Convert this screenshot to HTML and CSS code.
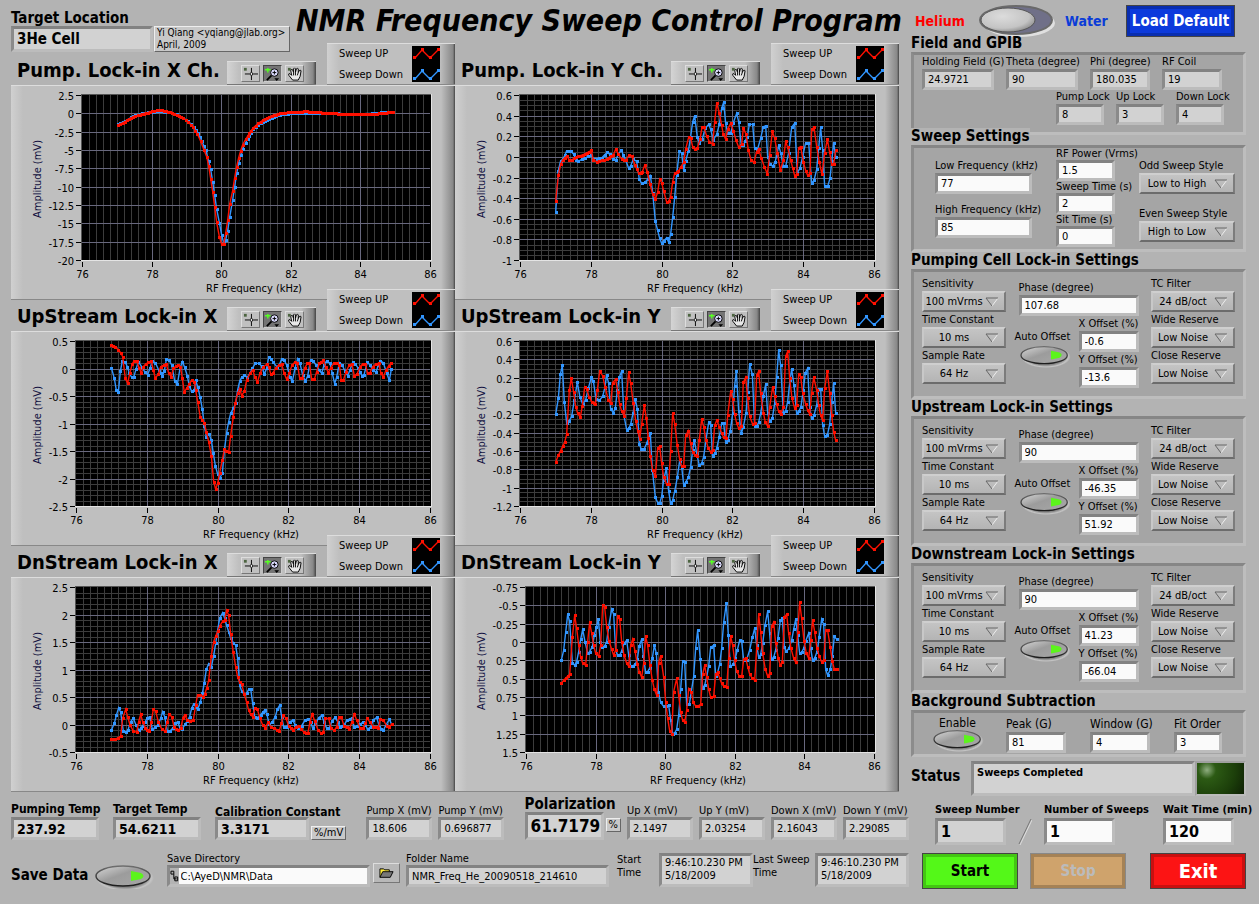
FILE: index.html
```html
<!DOCTYPE html>
<html lang="en">

<head>
  <meta charset="UTF-8">
  <meta name="viewport" content="width=device-width, initial-scale=1.0">
  <title>NMR Frequency Sweep Control Program</title>
  <link rel="stylesheet" href="styles.css">
</head>

<body>

<!-- Shared icons -->
<svg class="icons" width="0" height="0" aria-hidden="true">
  <defs>
    <linearGradient id="metal" x1="0" y1="0" x2="1" y2="1">
      <stop offset="0" stop-color="#d8d8d8"/>
      <stop offset="0.45" stop-color="#9c9c9c"/>
      <stop offset="1" stop-color="#a8a8a8"/>
    </linearGradient>
    <linearGradient id="rim" x1="0" y1="0" x2="0" y2="1">
      <stop offset="0" stop-color="#6e6e6e"/>
      <stop offset="1" stop-color="#1c1c1c"/>
    </linearGradient>
    <radialGradient id="halo">
      <stop offset="0.75" stop-color="#8a8a8a"/>
      <stop offset="0.9" stop-color="#c4c4c4"/>
      <stop offset="1" stop-color="#c4c4c4" stop-opacity="0"/>
    </radialGradient>
    <radialGradient id="knob" cx="0.4" cy="0.35" r="0.7">
      <stop offset="0" stop-color="#dcdcdc"/>
      <stop offset="0.7" stop-color="#c4c4c4"/>
      <stop offset="1" stop-color="#8a8a8a"/>
    </radialGradient>
  </defs>
  <symbol id="led" viewBox="0 0 60 28">
    <ellipse cx="31" cy="15" rx="29" ry="13" fill="url(#halo)"/>
    <ellipse cx="29" cy="13" rx="27" ry="10" fill="url(#metal)" stroke="url(#rim)" stroke-width="1.5"/>
    <path d="M37 8 l10 2 q5 3 0 6 l-10 2 z" fill="#5cf41c"/>
  </symbol>
  <symbol id="arrow" viewBox="0 0 14 10">
    <path d="M13 1 L7 9" stroke="#eee" fill="none"/>
    <path d="M7 9 L1 1 H13" stroke="#666" fill="none"/>
  </symbol>
  <symbol id="cursor" viewBox="0 0 18 16">
    <rect x="2" y="2" width="3" height="3" fill="#4c6440"/>
    <path d="M10 2v5M10 10v5M3 8.500h5M12 8.500h5" stroke="#000"/>
    <circle cx="10" cy="8.500" r="1.500" fill="#fff" stroke="#000"/>
  </symbol>
  <symbol id="zoom" viewBox="0 0 18 16">
    <path d="M4 2v5M1 4h6" stroke="#5f2" stroke-width="1.500"/>
    <path d="M8 10 L3 15" stroke="#000" stroke-width="2"/>
    <circle cx="11" cy="7" r="4" fill="#dcdcff" stroke="#000"/>
    <path d="M11 5v4M9 7h4" stroke="#000"/>
    <path d="M11 13h5l-2.500 3z" fill="#000"/>
  </symbol>
  <symbol id="hand" viewBox="0 0 18 16">
    <rect x="2" y="2" width="3" height="3" fill="#4c6440"/>
    <path d="M7 15 L3 10 Q2 8 4 8 L6 10 L5 5 Q5 3 7 4 L8 7 V3 Q9 1 10 3 V7 L11 3 Q12 2 13 3 L13 7 L14 5 Q15 4 16 5 L15 11 L13 15 Z" fill="#e8e8e8" stroke="#000"/>
    <path d="M8 7v3M10 7v3M13 7l-1 3" stroke="#000"/>
  </symbol>
  <symbol id="keys" viewBox="0 0 28 36">
    <rect width="28" height="36" fill="#000"/>
    <path d="M3 12 L10 4 L18 12 L26 4" fill="none" stroke="#ff1000" stroke-width="1.3"/>
    <path d="M1 10h3v3h-3zM9 2h3v3h-3zM17 10h3v3h-3zM25 2h3v3h-3z" fill="#ff1000"/>
    <path d="M3 33 L10 25 L18 33 L26 25" fill="none" stroke="#3296ff" stroke-width="1.3"/>
    <path d="M1 31h3v3h-3zM9 23h3v3h-3zM17 31h3v3h-3zM25 23h3v3h-3z" fill="#3296ff"/>
  </symbol>
</svg>

<div class="panel">

  <main class="main">

    <header class="masthead">
      <label class="field target">
        <b>Target Location</b>
        <input class="grey" value="3He Cell" readonly>
      </label>
      <p class="note credit">Yi Qiang &lt;yqiang@jlab.org&gt;<br>April, 2009</p>
      <h1>NMR Frequency Sweep Control Program</h1>
    </header>

    <div class="graphs">
      <section class="graph">
        <header>
          <h2>Pump. Lock-in X Ch.</h2>
          <div class="palette">
            <button aria-label="Cursor"><svg><use href="#cursor"/></svg></button>
            <button class="on" aria-label="Zoom"><svg><use href="#zoom"/></svg></button>
            <button aria-label="Pan"><svg><use href="#hand"/></svg></button>
          </div>
          <div class="legend"><p>Sweep UP<br>Sweep Down</p><svg><use href="#keys"/></svg></div>
        </header>
        <svg class="plot" data-plot="pumpX"></svg>
      </section>

      <section class="graph">
        <header>
          <h2>Pump. Lock-in Y Ch.</h2>
          <div class="palette">
            <button aria-label="Cursor"><svg><use href="#cursor"/></svg></button>
            <button class="on" aria-label="Zoom"><svg><use href="#zoom"/></svg></button>
            <button aria-label="Pan"><svg><use href="#hand"/></svg></button>
          </div>
          <div class="legend"><p>Sweep UP<br>Sweep Down</p><svg><use href="#keys"/></svg></div>
        </header>
        <svg class="plot" data-plot="pumpY"></svg>
      </section>

      <section class="graph">
        <header>
          <h2>UpStream Lock-in X</h2>
          <div class="palette">
            <button aria-label="Cursor"><svg><use href="#cursor"/></svg></button>
            <button class="on" aria-label="Zoom"><svg><use href="#zoom"/></svg></button>
            <button aria-label="Pan"><svg><use href="#hand"/></svg></button>
          </div>
          <div class="legend"><p>Sweep UP<br>Sweep Down</p><svg><use href="#keys"/></svg></div>
        </header>
        <svg class="plot" data-plot="upX"></svg>
      </section>

      <section class="graph">
        <header>
          <h2>UpStream Lock-in Y</h2>
          <div class="palette">
            <button aria-label="Cursor"><svg><use href="#cursor"/></svg></button>
            <button class="on" aria-label="Zoom"><svg><use href="#zoom"/></svg></button>
            <button aria-label="Pan"><svg><use href="#hand"/></svg></button>
          </div>
          <div class="legend"><p>Sweep UP<br>Sweep Down</p><svg><use href="#keys"/></svg></div>
        </header>
        <svg class="plot" data-plot="upY"></svg>
      </section>

      <section class="graph">
        <header>
          <h2>DnStream Lock-in X</h2>
          <div class="palette">
            <button aria-label="Cursor"><svg><use href="#cursor"/></svg></button>
            <button class="on" aria-label="Zoom"><svg><use href="#zoom"/></svg></button>
            <button aria-label="Pan"><svg><use href="#hand"/></svg></button>
          </div>
          <div class="legend"><p>Sweep UP<br>Sweep Down</p><svg><use href="#keys"/></svg></div>
        </header>
        <svg class="plot" data-plot="dnX"></svg>
      </section>

      <section class="graph">
        <header>
          <h2>DnStream Lock-in Y</h2>
          <div class="palette">
            <button aria-label="Cursor"><svg><use href="#cursor"/></svg></button>
            <button class="on" aria-label="Zoom"><svg><use href="#zoom"/></svg></button>
            <button aria-label="Pan"><svg><use href="#hand"/></svg></button>
          </div>
          <div class="legend"><p>Sweep UP<br>Sweep Down</p><svg><use href="#keys"/></svg></div>
        </header>
        <svg class="plot" data-plot="dnY"></svg>
      </section>
    </div>

    <!-- Results -->
    <div class="results">
      <div class="group temps">
        <label class="field bold"><b>Pumping Temp</b><input class="grey" value="237.92" readonly></label>
        <label class="field bold"><b>Target Temp</b><input class="grey" value="54.6211" readonly></label>
        <label class="field bold tight"><b>Calibration Constant</b><input class="grey" value="3.3171" readonly></label>
        <span class="note">%/mV</span>
      </div>
      <div class="group">
        <label class="field"><span>Pump X (mV)</span><input class="grey" value="18.606" readonly></label>
        <label class="field"><span>Pump Y (mV)</span><input class="grey" value="0.696877" readonly></label>
      </div>
      <div class="group">
        <label class="field polarization"><b>Polarization</b><input class="grey" value="61.7179" readonly></label>
        <span class="note percent">%</span>
        <label class="field"><span>Up X (mV)</span><input class="grey" value="2.1497" readonly></label>
        <label class="field"><span>Up Y (mV)</span><input class="grey" value="2.03254" readonly></label>
        <label class="field"><span>Down X (mV)</span><input class="grey" value="2.16043" readonly></label>
        <label class="field"><span>Down Y (mV)</span><input class="grey" value="2.29085" readonly></label>
      </div>
    </div>

    <!-- Saving -->
    <div class="saving">
      <label class="save" for="save-data">Save Data</label>
      <button class="led large" id="save-data"><svg><use href="#led"/></svg></button>
      <div class="field path">
        <label for="save-dir">Save Directory</label>
        <div class="pathbox">
          <svg viewBox="0 0 9 12"><path d="M1 1h3v3h-3zM4 4v5M4 9h3M5 7h3v4h-3z" fill="none" stroke="#000"/></svg>
          <input id="save-dir" value="C:\AyeD\NMR\Data">
        </div>
      </div>
      <button class="browse" aria-label="Browse">
        <svg viewBox="0 0 16 12"><path d="M1 11V2h4l1 1h5v2" fill="#ffec3d" stroke="#000"/><path d="M1 11L4 5h11l-3 6z" fill="#777" stroke="#000"/></svg>
      </button>
      <label class="field path"><span>Folder Name</span><input class="grey" value="NMR_Freq_He_20090518_214610" readonly></label>
      <label class="stamp start" for="start-time">Start Time</label>
      <output class="time" id="start-time">9:46:10.230 PM<br>5/18/2009</output>
      <label class="stamp" for="last-time">Last Sweep Time</label>
      <output class="time" id="last-time">9:46:10.230 PM<br>5/18/2009</output>
    </div>

  </main>

  <aside class="side">

    <div class="top">
      <span class="helium">Helium</span>
      <button class="toggle" aria-label="Helium or water">
        <svg viewBox="0 0 76 32">
          <ellipse cx="40" cy="18" rx="36" ry="14" fill="#e0e0e0"/>
          <ellipse cx="37" cy="15" rx="36" ry="14" fill="#707088" stroke="#6a6a6a" stroke-width="2"/>
          <ellipse cx="29" cy="15" rx="27" ry="12" fill="url(#knob)" stroke="#555"/>
        </svg>
      </button>
      <span class="water">Water</span>
      <button class="push load">Load Default</button>
    </div>

    <h3>Field and GPIB</h3>
    <div class="box gpib">
      <div class="line">
        <label class="field"><span>Holding Field (G)</span><input class="grey" value="24.9721" readonly></label>
        <label class="field"><span>Theta (degree)</span><input class="grey" value="90" readonly></label>
        <label class="field narrow"><span>Phi (degree)</span><input class="grey" value="180.035" readonly></label>
        <label class="field narrow"><span>RF Coil</span><input class="grey" value="19" readonly></label>
      </div>
      <div class="line locks">
        <label class="field"><span>Pump Lock</span><input class="grey" value="8" readonly></label>
        <label class="field"><span>Up Lock</span><input class="grey" value="3" readonly></label>
        <label class="field"><span>Down Lock</span><input class="grey" value="4" readonly></label>
      </div>
    </div>

    <h3 class="over">Sweep Settings</h3>
    <div class="box sweep">
      <div class="col freq">
        <label class="field"><span>Low Frequency (kHz)</span><input value="77"></label>
        <label class="field"><span>High Frequency (kHz)</span><input value="85"></label>
      </div>
      <div class="col timing">
        <label class="field"><span>RF Power (Vrms)</span><input value="1.5"></label>
        <label class="field"><span>Sweep Time (s)</span><input value="2"></label>
        <label class="field"><span>Sit Time (s)</span><input value="0"></label>
      </div>
      <div class="col style">
        <label class="field"><span>Odd Sweep Style</span><span class="ring"><select><option>Low to High</option></select><svg><use href="#arrow"/></svg></span></label>
        <label class="field"><span>Even Sweep Style</span><span class="ring"><select><option>High to Low</option></select><svg><use href="#arrow"/></svg></span></label>
      </div>
    </div>

    <h3>Pumping Cell Lock-in Settings</h3>
    <div class="box lockin">
      <div class="col">
        <label class="field"><span>Sensitivity</span><span class="ring"><select><option>100 mVrms</option></select><svg><use href="#arrow"/></svg></span></label>
        <label class="field"><span>Time Constant</span><span class="ring"><select><option>10 ms</option></select><svg><use href="#arrow"/></svg></span></label>
        <label class="field"><span>Sample Rate</span><span class="ring"><select><option>64 Hz</option></select><svg><use href="#arrow"/></svg></span></label>
      </div>
      <div class="middle">
        <label class="field phase"><span>Phase (degree)</span><input value="107.68"></label>
        <div class="offset">
          <label for="auto-1">Auto Offset</label>
          <button class="led" id="auto-1"><svg><use href="#led"/></svg></button>
        </div>
        <div class="col">
          <label class="field"><span>X Offset (%)</span><input value="-0.6"></label>
          <label class="field"><span>Y Offset (%)</span><input value="-13.6"></label>
        </div>
      </div>
      <div class="col">
        <label class="field"><span>TC Filter</span><span class="ring"><select><option>24 dB/oct</option></select><svg><use href="#arrow"/></svg></span></label>
        <label class="field"><span>Wide Reserve</span><span class="ring"><select><option>Low Noise</option></select><svg><use href="#arrow"/></svg></span></label>
        <label class="field"><span>Close Reserve</span><span class="ring"><select><option>Low Noise</option></select><svg><use href="#arrow"/></svg></span></label>
      </div>
    </div>

    <h3>Upstream Lock-in Settings</h3>
    <div class="box lockin">
      <div class="col">
        <label class="field"><span>Sensitivity</span><span class="ring"><select><option>100 mVrms</option></select><svg><use href="#arrow"/></svg></span></label>
        <label class="field"><span>Time Constant</span><span class="ring"><select><option>10 ms</option></select><svg><use href="#arrow"/></svg></span></label>
        <label class="field"><span>Sample Rate</span><span class="ring"><select><option>64 Hz</option></select><svg><use href="#arrow"/></svg></span></label>
      </div>
      <div class="middle">
        <label class="field phase"><span>Phase (degree)</span><input value="90"></label>
        <div class="offset">
          <label for="auto-2">Auto Offset</label>
          <button class="led" id="auto-2"><svg><use href="#led"/></svg></button>
        </div>
        <div class="col">
          <label class="field"><span>X Offset (%)</span><input value="-46.35"></label>
          <label class="field"><span>Y Offset (%)</span><input value="51.92"></label>
        </div>
      </div>
      <div class="col">
        <label class="field"><span>TC Filter</span><span class="ring"><select><option>24 dB/oct</option></select><svg><use href="#arrow"/></svg></span></label>
        <label class="field"><span>Wide Reserve</span><span class="ring"><select><option>Low Noise</option></select><svg><use href="#arrow"/></svg></span></label>
        <label class="field"><span>Close Reserve</span><span class="ring"><select><option>Low Noise</option></select><svg><use href="#arrow"/></svg></span></label>
      </div>
    </div>

    <h3>Downstream Lock-in Settings</h3>
    <div class="box lockin">
      <div class="col">
        <label class="field"><span>Sensitivity</span><span class="ring"><select><option>100 mVrms</option></select><svg><use href="#arrow"/></svg></span></label>
        <label class="field"><span>Time Constant</span><span class="ring"><select><option>10 ms</option></select><svg><use href="#arrow"/></svg></span></label>
        <label class="field"><span>Sample Rate</span><span class="ring"><select><option>64 Hz</option></select><svg><use href="#arrow"/></svg></span></label>
      </div>
      <div class="middle">
        <label class="field phase"><span>Phase (degree)</span><input value="90"></label>
        <div class="offset">
          <label for="auto-3">Auto Offset</label>
          <button class="led" id="auto-3"><svg><use href="#led"/></svg></button>
        </div>
        <div class="col">
          <label class="field"><span>X Offset (%)</span><input value="41.23"></label>
          <label class="field"><span>Y Offset (%)</span><input value="-66.04"></label>
        </div>
      </div>
      <div class="col">
        <label class="field"><span>TC Filter</span><span class="ring"><select><option>24 dB/oct</option></select><svg><use href="#arrow"/></svg></span></label>
        <label class="field"><span>Wide Reserve</span><span class="ring"><select><option>Low Noise</option></select><svg><use href="#arrow"/></svg></span></label>
        <label class="field"><span>Close Reserve</span><span class="ring"><select><option>Low Noise</option></select><svg><use href="#arrow"/></svg></span></label>
      </div>
    </div>

    <h3>Background Subtraction</h3>
    <div class="box background">
      <div class="enable">
        <label for="enable">Enable</label>
        <button class="led" id="enable"><svg><use href="#led"/></svg></button>
      </div>
      <label class="field"><span>Peak (G)</span><input value="81"></label>
      <label class="field"><span>Window (G)</span><input value="4"></label>
      <label class="field order"><span>Fit Order</span><input value="3"></label>
    </div>

    <div class="status">
      <h3>Status</h3>
      <output class="message">Sweeps Completed</output>
      <span class="lamp"></span>
    </div>

    <div class="counts">
      <label class="field bold"><b>Sweep Number</b><input class="grey" value="1" readonly></label>
      <svg viewBox="0 0 14 26"><path d="M13 0L1 25" stroke="#777"/><path d="M14 1L2 26" stroke="#ddd"/></svg>
      <label class="field bold"><b>Number of Sweeps</b><input value="1"></label>
      <label class="field bold wait"><b>Wait Time (min)</b><input value="120"></label>
    </div>

    <div class="actions">
      <button class="push go">Start</button>
      <button class="push stop" disabled>Stop</button>
      <button class="push exit">Exit</button>
    </div>

  </aside>
</div>

<script src="plots.js"></script>
</body>

</html>
```

FILE: styles.css
```css
*,
*::before,
*::after {
  box-sizing: border-box;
}

body {
  margin: 0;
  background: #b3b3b3;
  color: #000;
  font: 11px/12px "DejaVu Sans Condensed", "DejaVu Sans", sans-serif;
}

h1,
h2,
h3,
p {
  margin: 0;
}

button,
input,
select {
  font: inherit;
  color: inherit;
  margin: 0;
  border-radius: 0;
}

button {
  padding: 0;
  border: 0;
  background: none;
}

svg {
  display: block;
}

.icons {
  position: absolute;
}

.panel {
  display: grid;
  grid-template-columns: minmax(0, 898fr) minmax(0, 335fr);
  gap: 2px;
  padding: 0 13px 0 11px;
}

/* fields */

.field {
  display: flex;
  flex-direction: column;
  min-width: 0;
  white-space: nowrap;
}

input,
.time,
.message {
  width: 100%;
  min-width: 0;
  height: 21px;
  padding: 0 0 0 3px;
  border: 3px solid;
  border-color: #828282 #bcbcbc #bcbcbc #8a8a8a;
  background: #fafafa;
  outline: 0;
}

input.grey,
.time,
.message {
  background: #d2d2d2;
}

.bold input {
  font-weight: bold;
}

.note {
  padding: 0 2px;
  border: 1px solid;
  border-color: #eee #666 #666 #eee;
  background: #c8c8c8;
}

.ring {
  display: grid;
  align-items: center;
}

.ring select,
.ring svg {
  grid-area: 1 / 1;
}

.ring select {
  width: 100%;
  height: 21px;
  padding: 0 20px 0 0;
  border: 2px solid;
  border-color: #cfcfcf #7c7c7c #6c6c6c #c8c8c8;
  background: linear-gradient(#c4c4c4, #b4b4b4);
  text-align: center;
  text-align-last: center;
  appearance: none;
}

.ring svg {
  justify-self: end;
  width: 14px;
  height: 10px;
  margin-right: 7px;
  pointer-events: none;
}

.led {
  width: 52px;
  height: 24px;
}

.led svg {
  width: 100%;
  height: 100%;
}

/* masthead */

.masthead {
  display: flex;
  align-items: flex-end;
  height: 52px;
}

.target {
  width: 142px;
}

.target b {
  font-size: 15px;
  line-height: 16px;
}

.target input {
  height: 26px;
  font-size: 15px;
  font-weight: bold;
}

.credit {
  width: 136px;
  height: 26px;
  margin-left: 1px;
  font-size: 10px;
  white-space: nowrap;
}

h1 {
  flex: 1;
  align-self: flex-start;
  padding: 3px 0 0 6px;
  font-size: 30px;
  line-height: 36px;
  font-style: italic;
  white-space: nowrap;
}

/* graphs */

.graphs {
  display: grid;
  grid-template-columns: 1fr 1fr;
  margin: -9px 10px 0 0;
}

.graph + .graph + .graph {
  margin-top: -11px;
}

.graph header {
  position: relative;
  display: flex;
  align-items: flex-end;
  height: 42px;
}

.graph h2 {
  flex: 1;
  padding: 0 0 3px 6px;
  font-size: 20px;
  line-height: 24px;
  white-space: nowrap;
}

.palette {
  display: flex;
  align-items: center;
  gap: 3px;
  width: 89px;
  height: 24px;
  padding-left: 14px;
  border-top: 1px solid #ddd;
  border-bottom: 1px solid #777;
  background: linear-gradient(90deg, #d4d4d4, #bfbfbf 12px, #bfbfbf 74px, #888 86px, #444);
}

.palette button {
  width: 19px;
  height: 17px;
  border: 1px solid;
  border-color: #ddd #777 #777 #ddd;
  background: #c0c0c0;
}

.palette .on {
  border-color: #444 #ccc #ccc #444;
  background: #747474;
}

.palette svg {
  width: 17px;
  height: 15px;
}

.legend {
  display: flex;
  justify-content: space-between;
  width: 128px;
  height: 42px;
  margin-left: 11px;
  padding: 2px 15px 3px 12px;
  border-top: 1px solid #ddd;
  border-bottom: 1px solid #888;
  background: linear-gradient(90deg, #d0d0d0, #bfbfbf 12px, #bfbfbf 113px, #888 126px, #444);
  line-height: 21px;
  white-space: nowrap;
}

.legend p {
  margin-top: -3px;
}

.legend svg {
  width: 28px;
  height: 36px;
}

.plot {
  width: 100%;
  height: auto;
  aspect-ratio: 444 / 215;
  border-top: 1px solid #ddd;
  border-bottom: 1px solid #888;
  background: linear-gradient(90deg, #d0d0d0, #bfbfbf 12px, #bfbfbf calc(100% - 14px), #888 calc(100% - 2px), #444);
}

.plot text {
  font-size: 11px;
}

/* results */

.results {
  display: flex;
  justify-content: space-between;
  align-items: flex-end;
  margin-top: 4px;
}

.group {
  display: flex;
  align-items: flex-end;
  gap: 6px;
}

.group .field {
  width: 66px;
}

.group .field input {
  height: 23px;
}

.temps {
  gap: 14px;
}

.group .bold {
  width: 88px;
}

.group .bold b {
  font-size: 12px;
  line-height: 15px;
}

.group .bold input {
  font-size: 14px;
}

.group .tight {
  width: 94px;
}

.group .tight b {
  line-height: 10px;
}

.temps .note {
  margin-left: -12px;
}

.group .polarization {
  width: 79px;
}

.polarization b {
  font-size: 15px;
  line-height: 16px;
}

.group .polarization input {
  height: 28px;
  font-size: 17px;
  font-weight: bold;
}

.percent {
  margin: 0 0 8px -4px;
}

/* saving */

.saving {
  display: flex;
  align-items: flex-end;
  margin-top: 13px;
}

.save {
  width: 82px;
  font-size: 15px;
  font-weight: bold;
  line-height: 24px;
  white-space: nowrap;
}

.large {
  width: 62px;
  height: 28px;
  margin: 0 12px -4px 0;
}

.path {
  flex: 1;
}

.path > input,
.pathbox {
  height: 22px;
}

.pathbox {
  display: flex;
  align-items: center;
  border: 3px solid;
  border-color: #828282 #bcbcbc #bcbcbc #8a8a8a;
}

.pathbox svg {
  width: 9px;
  height: 12px;
}

.pathbox input {
  height: 16px;
  padding-left: 2px;
  border: 0;
}

.browse {
  width: 27px;
  height: 20px;
  margin: 0 6px 4px 3px;
  padding: 2px 5px;
  border: 1px solid;
  border-color: #ddd #777 #777 #ddd;
  background: #b8b8b8;
}

.stamp {
  width: 62px;
  align-self: flex-start;
  line-height: 13px;
}

.start {
  width: 50px;
  padding: 0 16px 0 8px;
}

.time {
  width: 94px;
  height: 34px;
  line-height: 13px;
  white-space: nowrap;
}

/* side column */

.top {
  display: flex;
  align-items: center;
  height: 37px;
  padding: 5px 11px 0 4px;
  font-size: 14px;
  font-weight: bold;
}

.helium {
  width: 64px;
  color: #f00;
}

.toggle {
  width: 76px;
  height: 32px;
}

.water {
  flex: 1;
  padding-left: 10px;
  color: #0a3cd8;
}

.push {
  border: 1px solid #444;
  outline: 3px solid #0003;
  outline-offset: -4px;
  font-weight: bold;
}

.load {
  width: 109px;
  height: 32px;
  background: #0c3adc;
  color: #fff;
  font-size: 15px;
}

h3 {
  width: fit-content;
  font-size: 15px;
  line-height: 17px;
  white-space: nowrap;
}

.top + h3 {
  margin-top: -2px;
}

.over {
  position: relative;
  margin-top: -7px;
  background: #b3b3b3;
}

.box {
  display: flex;
  border: 3px solid;
  border-color: #868686 #bdbdbd #bdbdbd #8c8c8c;
  background: #a5a5a5;
}

.col {
  display: flex;
  flex-direction: column;
}

.gpib {
  flex-direction: column;
  height: 83px;
  padding-left: 8px;
}

.line {
  display: flex;
  gap: 12px;
}

.line .field {
  width: 72px;
}

.line .narrow {
  width: 60px;
}

.line .field span {
  line-height: 14px;
}

.locks {
  padding-left: 134px;
}

.locks .field {
  width: 48px;
}

.sweep {
  justify-content: space-between;
  height: 107px;
  padding: 0 8px 0 21px;
}

.freq {
  width: 97px;
  padding-top: 10px;
  gap: 8px;
}

.freq span {
  line-height: 15px;
}

.timing {
  width: 59px;
}

.style {
  width: 96px;
  padding-top: 10px;
  gap: 12px;
}

.style .field > span:first-child {
  line-height: 15px;
}

.lockin {
  justify-content: space-between;
  height: 130px;
  padding: 4px 8px 0;
}

.lockin > .col {
  width: 84px;
}

.lockin .field > span:first-child {
  line-height: 15px;
}

.middle {
  display: grid;
  grid-template-columns: 60px 60px;
  align-content: start;
  padding-top: 4px;
}

.phase {
  grid-column: 1 / -1;
}

.offset {
  padding-top: 14px;
  white-space: nowrap;
}

.offset label {
  display: block;
  margin: 0 -4px;
  line-height: 14px;
}

.background {
  height: 47px;
  padding-left: 18px;
  font-size: 12px;
}

.background .field {
  width: 60px;
  margin: 3px 24px 0 0;
}

.background .order {
  width: 48px;
  margin-right: 0;
}

.background .field span {
  line-height: 16px;
}

.background input {
  font-size: 11px;
}

.enable {
  width: 74px;
  padding-top: 4px;
}

.enable label {
  display: block;
  padding-left: 7px;
}

.enable .led {
  margin-top: -1px;
}

.status {
  display: flex;
  height: 35px;
  margin-top: 4px;
}

.status h3 {
  width: 60px;
  line-height: 31px;
}

.message {
  flex: 1;
  height: 35px;
  line-height: 18px;
  font-weight: bold;
}

.lamp {
  width: 51px;
  border: 2px solid;
  border-color: #a0a0a0 #bcbcbc #bcbcbc #a0a0a0;
  background: radial-gradient(circle at 10px 7px, #8fae80, #2c5a14 9px, #1c3f0a 28px, #0c1c04 46px);
}

.counts {
  display: flex;
  align-items: flex-end;
  gap: 12px;
  margin-top: 6px;
  padding: 0 12px 0 24px;
}

.counts .field {
  width: 71px;
}

.counts b {
  font-size: 11px;
  line-height: 16px;
}

.counts input {
  height: 27px;
  font-size: 16px;
}

.counts svg {
  width: 14px;
  height: 26px;
}

.counts .wait {
  margin-left: auto;
}

.actions {
  display: flex;
  gap: 12px;
  margin-top: 8px;
  padding-left: 11px;
}

.actions .push {
  width: 96px;
  height: 36px;
  font-size: 15px;
}

.go {
  background: #54f818;
}

.actions .stop {
  border-color: #888;
  background: #cfa36c;
  color: #bbb;
}

.actions .exit {
  margin-left: auto;
  background: #fc1414;
  color: #fff;
  font-size: 20px;
}
```

FILE: plots.js
```js
// Traces are lists of x,y samples on a grid of three units per pixel,
// measured from the "origin" of each plot.
const plots = {
  pumpX: {
    left: 71, origin: [ 33, 255 ], minor: 0,
    ticks: [ "2.5", "0", "-2.5", "-5", "-7.5", "-10", "-12.5", "-15", "-17.5", "-20" ],
    down: "353,373 375,363 400,348 425,340 450,336 470,334 485,334 510,337 530,343 550,354 565,364 582,382 594,400 606,424 617,450 626,484 632,508 638,545 644,585 650,627 658,668 665,705 671,728 677,720 683,692 689,652 698,600 704,560 710,520 716,490 722,465 728,446 737,428 748,408 760,388 775,374 795,362 815,353 840,344 870,340 920,338 960,339 1000,339 1050,343 1085,341 1130,340 1150,336 1178,336",
    up: "353,376 375,365 400,350 425,342 450,336 470,331 485,331 510,336 530,344 550,354 565,366 580,382 592,402 602,424 612,450 620,470 626,498 632,536 638,575 644,620 650,667 658,710 665,733 671,733 677,700 683,661 689,613 698,572 704,533 710,500 716,473 722,452 728,434 737,418 748,400 760,383 775,370 795,357 815,347 840,340 870,336 920,334 960,337 1000,340 1050,342 1085,343 1130,341 1165,337 1178,335"
  },
  pumpY: {
    left: 65, origin: [ 15, 255 ], minor: 4,
    ticks: [ "0.6", "0.4", "0.2", "0", "-0.2", "-0.4", "-0.6", "-0.8", "-1" ],
    down: "317,637 325,512 332,482 338,478 345,465 350,452 362,453 371,463 378,480 385,484 395,478 405,474 415,469 423,466 430,476 440,476 455,474 464,464 472,457 480,463 488,478 497,481 505,463 514,451 520,465 527,480 536,505 542,498 550,478 560,484 568,538 575,550 585,547 593,538 601,527 608,578 616,664 623,691 629,715 635,730 641,723 650,713 656,727 662,702 668,652 674,592 680,524 688,454 695,460 701,511 707,483 715,454 722,410 728,366 734,347 742,412 748,430 757,416 766,385 776,373 782,388 790,420 800,403 808,373 815,325 821,307 827,370 833,398 842,400 850,368 860,340 866,365 874,435 880,435 892,410 898,373 908,373 914,445 922,450 932,415 940,380 947,377 953,470 960,492 968,499 975,487 980,468 986,436 992,458 1000,499 1007,499 1016,458 1025,382 1034,370 1042,518 1050,505 1058,470 1067,428 1076,428 1085,550 1092,541 1100,508 1112,382 1118,450 1124,559 1133,559 1140,535 1151,428 1157,470",
    up: "317,604 325,526 332,493 338,480 350,468 358,479 365,480 373,474 385,469 400,464 412,458 424,451 430,480 440,485 455,481 470,478 482,468 490,466 497,448 505,461 515,478 528,480 537,466 545,467 555,495 566,520 577,515 584,496 592,515 600,552 608,583 616,598 623,577 629,538 635,548 641,573 650,606 656,604 662,590 668,545 674,520 685,514 693,500 701,487 707,448 716,412 722,415 728,440 734,448 742,445 750,418 756,382 761,380 770,408 778,425 788,433 794,365 800,310 808,338 815,376 820,403 827,418 833,388 842,370 850,392 858,420 866,442 875,433 880,385 888,402 895,450 903,480 912,487 920,455 926,447 934,475 943,500 952,521 959,465 967,394 974,415 982,458 991,511 1000,480 1007,424 1013,442 1022,480 1034,527 1040,523 1046,443 1052,440 1060,485 1067,512 1073,526 1080,520 1085,388 1092,382 1100,440 1108,487 1116,523 1124,458 1132,418 1139,457 1145,492 1151,492 1157,450"
  },
  upX: {
    left: 65, origin: [ 33, 123 ], minor: 5,
    ticks: [ "0.5", "0", "-0.5", "-1", "-1.5", "-2", "-2.5" ],
    down: "334,233 343,265 349,301 355,307 361,244 367,213 376,217 382,230 388,250 395,262 401,262 408,238 415,215 425,230 435,247 443,254 450,235 457,213 466,218 476,240 487,257 493,243 499,208 507,211 515,225 524,273 532,283 540,235 547,215 554,232 562,258 568,288 575,304 583,300 587,271 593,290 600,320 607,357 613,407 619,440 627,432 634,450 640,490 646,527 653,553 659,565 667,550 673,482 680,428 686,395 692,370 700,355 707,340 713,300 719,274 725,262 733,256 742,262 751,248 757,235 766,220 776,220 785,228 793,253 800,235 806,202 812,206 820,217 830,230 838,225 845,206 852,210 860,225 870,262 877,274 885,235 893,206 900,220 908,255 916,274 923,258 932,209 940,213 948,225 958,240 965,250 972,225 980,212 990,220 997,250 1004,281 1010,262 1018,218 1026,225 1035,243 1043,257 1050,240 1058,217 1066,222 1075,235 1086,257 1092,255 1102,217 1110,225 1118,240 1128,247 1135,225 1141,212 1150,218 1160,250 1168,271 1174,238",
    up: "334,166 346,170 355,180 362,188 368,200 376,265 383,280 389,250 397,222 402,213 410,212 418,235 424,250 430,230 437,222 445,217 454,214 460,240 466,265 475,252 482,230 492,225 499,222 506,250 514,260 520,235 529,227 535,225 541,230 547,265 553,307 560,294 568,282 575,271 583,277 587,300 593,335 601,382 607,390 613,400 619,425 626,455 634,497 641,575 647,598 653,580 659,548 667,510 673,478 679,482 686,487 692,437 700,380 706,338 713,310 719,296 725,317 733,304 740,270 750,250 758,240 765,260 772,277 780,250 790,230 800,223 806,230 812,251 818,250 827,235 836,225 845,222 852,248 860,268 868,250 876,225 884,217 892,220 899,265 906,265 914,235 922,220 928,218 935,268 943,268 950,245 958,220 970,211 977,230 985,248 993,233 1001,220 1010,220 1018,225 1024,271 1030,271 1038,245 1048,225 1056,222 1063,258 1071,252 1080,230 1088,222 1096,223 1103,250 1110,248 1118,230 1128,222 1136,220 1143,250 1150,262 1158,240 1166,228 1174,220"
  },
  upY: {
    left: 65, origin: [ 15, 123 ], minor: 4,
    ticks: [ "0.6", "0.4", "0.2", "0", "-0.2", "-0.4", "-0.6", "-0.8", "-1", "-1.2" ],
    down: "317,373 325,325 331,253 337,226 343,337 350,398 358,392 365,379 373,330 382,277 390,322 398,342 407,330 415,295 424,262 430,272 438,328 448,331 458,319 464,295 470,256 476,280 482,358 490,368 496,354 502,300 508,262 515,243 522,378 530,419 536,415 542,403 549,370 556,328 562,357 568,463 574,478 583,476 590,460 601,430 607,540 616,622 624,640 629,640 635,619 641,570 649,535 656,604 662,640 668,631 674,604 682,562 689,512 695,530 701,584 707,577 715,562 722,530 728,480 733,451 740,490 748,526 755,520 761,500 768,450 776,397 782,405 788,499 794,490 800,475 808,440 815,400 821,400 827,457 833,450 841,422 848,370 854,287 859,244 866,362 874,430 880,411 888,370 893,305 899,223 907,253 914,409 920,409 926,397 932,370 940,318 947,283 953,370 959,394 967,385 974,340 980,262 986,181 992,226 1000,370 1007,363 1013,335 1020,270 1025,238 1032,285 1040,370 1047,363 1053,350 1060,300 1066,248 1073,235 1079,352 1085,385 1092,376 1100,345 1106,298 1112,298 1118,405 1124,439 1132,436 1139,403 1145,337 1151,280 1157,368",
    up: "317,517 325,496 332,482 338,469 344,457 350,433 358,300 364,265 371,307 377,350 383,370 391,382 397,347 404,292 410,296 417,320 425,335 436,343 442,300 449,244 458,257 465,290 475,330 482,340 488,278 497,268 503,305 509,342 515,364 523,378 529,325 536,247 542,280 550,340 557,392 563,422 569,446 575,403 583,346 589,385 595,445 601,498 608,541 616,559 623,475 629,469 635,520 641,562 650,583 656,583 662,484 668,368 674,401 682,466 689,508 695,529 701,529 707,436 715,422 722,460 728,485 734,496 742,499 748,449 755,388 761,410 768,451 775,475 782,485 788,480 794,406 800,391 808,410 815,430 821,442 828,445 833,376 842,304 848,328 854,373 860,400 866,415 874,409 880,277 887,262 893,325 899,379 908,403 914,398 920,256 926,244 932,310 940,368 946,397 953,409 959,352 968,290 974,318 980,343 986,364 992,373 1000,352 1007,199 1013,184 1019,265 1026,325 1034,355 1040,346 1046,253 1052,260 1058,308 1067,343 1073,361 1079,373 1085,308 1091,262 1100,300 1106,346 1112,376 1118,391 1124,295 1132,244 1139,308 1145,376 1151,425 1157,451"
  },
  dnX: {
    left: 65, origin: [ 33, 126 ], minor: 5,
    ticks: [ "2.5", "2", "1.5", "1", "0.5", "0", "-0.5" ],
    down: "334,586 343,565 349,541 356,518 362,532 370,589 377,592 384,585 392,560 400,550 408,570 417,586 428,572 436,560 442,548 449,546 457,582 466,577 475,570 482,550 488,530 494,545 502,588 509,589 518,580 526,565 533,560 540,580 547,582 555,568 562,558 569,545 575,520 581,507 593,523 601,502 607,475 613,443 619,403 626,386 634,397 641,362 647,325 653,285 659,250 668,233 674,250 680,271 686,290 692,310 700,323 707,331 713,370 719,450 725,469 733,478 740,475 746,463 752,461 758,505 764,545 772,548 782,540 788,532 794,526 800,536 808,568 816,562 826,545 832,523 839,511 845,545 851,577 860,575 870,560 878,556 886,570 895,578 905,572 915,556 924,551 932,560 938,580 946,568 956,548 965,541 972,560 980,580 988,578 996,558 1005,547 1013,560 1020,575 1032,570 1042,555 1056,549 1063,577 1072,572 1088,562 1096,570 1103,583 1112,575 1120,555 1130,547 1138,575 1150,586 1158,570 1168,553 1175,568",
    up: "334,611 345,613 355,608 362,603 368,550 377,523 383,545 390,570 400,588 410,592 416,560 422,538 428,560 436,578 448,589 454,560 460,523 467,529 475,560 485,582 495,589 502,560 508,538 515,545 522,575 533,586 542,580 549,548 554,540 562,555 570,558 580,555 587,510 593,479 601,479 608,485 614,478 620,460 626,436 634,362 641,320 647,304 653,289 660,272 668,259 674,256 680,226 686,241 692,298 700,352 707,395 713,427 719,442 725,447 733,478 740,502 746,526 752,538 758,545 764,520 772,523 780,550 788,570 796,578 804,562 812,575 822,580 838,587 844,565 850,541 858,550 866,573 878,586 888,575 896,572 904,583 912,592 924,593 930,560 937,537 944,558 954,585 964,595 970,592 976,550 986,550 993,580 1003,586 1010,575 1016,547 1024,547 1032,572 1048,581 1056,560 1063,537 1070,555 1080,578 1090,578 1096,565 1102,550 1110,562 1120,575 1135,578 1141,553 1150,556 1160,572 1168,575 1175,568"
  },
  dnY: {
    left: 71, origin: [ 15, 126 ], minor: 0,
    ticks: [ "-0.75", "-0.5", "-0.25", "0", "0.25", "0.5", "0.75", "1", "1.25", "1.5" ],
    down: "334,376 341,346 347,292 353,238 359,259 367,383 374,391 380,380 386,350 392,313 398,283 405,320 413,355 419,350 427,335 433,300 439,277 445,253 451,320 457,337 464,333 470,320 476,275 485,223 491,238 497,345 503,361 509,361 515,348 522,325 530,316 536,360 542,394 549,392 556,388 562,372 568,333 575,313 580,362 587,412 593,410 600,398 607,370 613,331 619,355 625,470 632,502 641,514 649,512 656,511 662,555 668,596 674,594 680,583 686,541 692,463 698,379 704,382 710,508 718,508 724,470 731,424 737,340 743,286 751,373 758,458 764,451 770,425 776,394 782,337 791,331 797,422 803,412 809,388 815,340 821,262 829,205 835,301 841,394 850,388 856,370 862,345 869,316 875,319 881,376 890,374 899,345 907,307 914,280 920,330 926,367 932,358 938,325 945,270 953,229 959,295 965,373 971,367 977,345 984,310 991,256 997,250 1003,337 1009,349 1017,340 1025,316 1031,283 1037,253 1043,300 1049,355 1055,352 1061,340 1067,318 1076,295 1082,340 1088,376 1094,370 1101,350 1108,305 1115,253 1121,268 1127,403 1133,421 1141,403 1147,362 1153,304 1160,313",
    up: "334,445 341,436 347,430 353,424 359,418 367,307 374,241 380,280 386,330 392,367 398,385 407,391 413,320 419,262 425,295 431,331 437,355 446,364 452,330 458,211 464,217 470,275 477,318 485,343 491,361 497,345 503,244 509,253 515,320 522,360 530,385 536,394 542,331 548,313 555,348 562,388 568,410 575,427 581,385 587,304 593,331 600,390 607,436 613,463 620,481 626,384 632,362 641,427 647,500 653,550 659,587 665,596 671,470 680,430 686,480 692,532 698,556 704,562 710,526 716,461 724,472 730,502 737,514 743,514 752,508 758,418 764,391 770,427 776,463 782,487 791,484 797,418 803,411 809,430 815,445 821,454 830,457 836,370 842,304 848,331 854,376 860,409 868,424 875,424 881,373 887,368 893,395 899,418 907,430 914,436 920,340 926,238 932,290 938,355 946,403 953,424 959,415 965,274 971,262 977,325 985,370 991,391 997,382 1003,247 1010,238 1016,295 1023,340 1031,370 1037,382 1043,292 1049,202 1055,250 1062,318 1069,355 1076,370 1082,316 1088,256 1094,290 1101,340 1108,364 1115,382 1121,376 1127,286 1133,286 1141,337 1147,379 1153,403 1160,403"
  }
}

const right = 419
const top_ = 10
const bottom = 175

const line = ( x1, y1, x2, y2, color ) =>
  `<path d="M${x1} ${y1}L${x2} ${y2}" stroke="${color}"/>`

const trace = ( samples, origin, color ) => {
  const given = samples.split( " " ).map( ( pair ) => pair.split( "," ).map( Number ) )
  const points = []

  // fill wide steps so the markers stay evenly spaced
  given.forEach( ( point, i ) => {
    if ( i > 0 ) {
      const last = given[ i - 1 ]
      const steps = Math.max( 1, Math.round( ( point[ 0 ] - last[ 0 ] ) / 7 ) )
      for ( let s = 1; s < steps; s++ ) {
        points.push( [ 0, 1 ].map( ( k ) => last[ k ] + ( point[ k ] - last[ k ] ) * s / steps ) )
      }
    }
    points.push( point )
  } )

  const scaled = points.map( ( [ x, y ] ) => [ ( x - origin[ 0 ] ) / 3, ( y - origin[ 1 ] ) / 3 ] )
  const dots = scaled.map( ( [ x, y ] ) => `M${Math.round( x ) - 1} ${Math.round( y ) - 1}h3v3h-3z` ).join( "" )

  return `<polyline points="${scaled.join( " " )}" fill="none" stroke="${color}" stroke-width="1.4"/>` +
    `<path d="${dots}" fill="${color}" shape-rendering="crispEdges"/>`
}

document.querySelectorAll( ".plot" ).forEach( ( svg ) => {
  const plot = plots[ svg.dataset.plot ]
  const width = right - plot.left
  const rows = plot.ticks.length - 1
  let grid = ""
  let major = ""
  let text = ""

  for ( let i = 1; i < 50; i++ ) {
    const x = Math.round( plot.left + width * i / 50 ) + 0.5
    if ( i % 10 ) grid += line( x, top_, x, bottom, "#3c3c3c" )
    else major += line( x, top_, x, bottom, "#68687e" )
  }

  for ( let i = 1; i < rows * plot.minor; i++ ) {
    const y = Math.round( top_ + ( bottom - top_ ) * i / ( rows * plot.minor ) ) + 0.5
    if ( i % plot.minor ) grid += line( plot.left, y, right, y, "#3c3c3c" )
  }

  plot.ticks.forEach( ( label, i ) => {
    const y = Math.round( top_ + ( bottom - top_ ) * i / rows ) + 0.5
    if ( i > 0 && i < rows ) major += line( plot.left, y, right, y, "#68687e" )
    text += line( plot.left - 6, y, plot.left - 1, y, "#000" )
    text += `<text x="${plot.left - 8}" y="${y + 4}" text-anchor="end">${label}</text>`
  } )

  for ( let i = 0; i <= 5; i++ ) {
    const x = Math.round( plot.left + width * i / 5 ) + 0.5
    text += line( x, bottom + 2, x, bottom + 7, "#000" )
    text += `<text x="${x}" y="193" text-anchor="middle">${76 + 2 * i}</text>`
  }

  const center = ( plot.left + right ) / 2 - 2
  text += `<text x="${center}" y="207" text-anchor="middle">RF Frequency (kHz)</text>`
  text += `<text transform="translate(30 94) rotate(-90)" text-anchor="middle" fill="#101040">Amplitude (mV)</text>`

  svg.setAttribute( "viewBox", "0 1 444 213" )
  svg.innerHTML =
    `<rect x="${plot.left - 1}" y="${top_ - 1}" width="${width + 3}" height="${bottom - top_ + 2}" fill="#e4e4e4"/>` +
    `<rect x="${plot.left - 1}" y="${top_ - 1}" width="${width + 2}" height="${bottom - top_ + 1}" fill="#555"/>` +
    `<rect x="${plot.left}" y="${top_}" width="${width + 1}" height="${bottom - top_}" fill="#000"/>` +
    grid + major + text +
    trace( plot.down, plot.origin, "#3296ff" ) +
    trace( plot.up, plot.origin, "#ff1000" )
} )
```
